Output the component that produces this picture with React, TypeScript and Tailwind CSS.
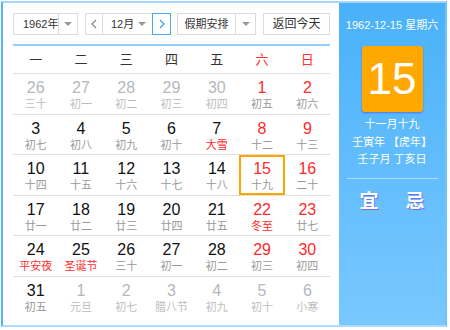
import React from 'react';

type Day = { n: number; l: string; other?: boolean; hl?: boolean; sel?: boolean };

const weeks: Day[][] = [
  [
    { n: 26, l: '三十', other: true },
    { n: 27, l: '初一', other: true },
    { n: 28, l: '初二', other: true },
    { n: 29, l: '初三', other: true },
    { n: 30, l: '初四', other: true },
    { n: 1, l: '初五' },
    { n: 2, l: '初六' },
  ],
  [
    { n: 3, l: '初七' },
    { n: 4, l: '初八' },
    { n: 5, l: '初九' },
    { n: 6, l: '初十' },
    { n: 7, l: '大雪', hl: true },
    { n: 8, l: '十二' },
    { n: 9, l: '十三' },
  ],
  [
    { n: 10, l: '十四' },
    { n: 11, l: '十五' },
    { n: 12, l: '十六' },
    { n: 13, l: '十七' },
    { n: 14, l: '十八' },
    { n: 15, l: '十九', sel: true },
    { n: 16, l: '二十' },
  ],
  [
    { n: 17, l: '廿一' },
    { n: 18, l: '廿二' },
    { n: 19, l: '廿三' },
    { n: 20, l: '廿四' },
    { n: 21, l: '廿五' },
    { n: 22, l: '冬至', hl: true },
    { n: 23, l: '廿七' },
  ],
  [
    { n: 24, l: '平安夜', hl: true },
    { n: 25, l: '圣诞节', hl: true },
    { n: 26, l: '三十' },
    { n: 27, l: '初一' },
    { n: 28, l: '初二' },
    { n: 29, l: '初三' },
    { n: 30, l: '初四' },
  ],
  [
    { n: 31, l: '初五' },
    { n: 1, l: '元旦', other: true },
    { n: 2, l: '初七', other: true },
    { n: 3, l: '腊八节', other: true },
    { n: 4, l: '初九', other: true },
    { n: 5, l: '初十', other: true },
    { n: 6, l: '小寒', other: true },
  ],
];

const weekdays = ['一', '二', '三', '四', '五', '六', '日'];

function Caret() {
  return <span className="w-0 h-0 border-x-[4px] border-t-[4px] border-x-transparent border-t-[#999]" />;
}

function Chevron({ dir, color }: { dir: 'l' | 'r'; color: string }) {
  return (
    <svg width="6" height="10" viewBox="0 0 6 10">
      <polyline
        points={dir === 'l' ? '5,1 1,5 5,9' : '1,1 5,5 1,9'}
        fill="none"
        stroke={color}
        strokeWidth="1.2"
      />
    </svg>
  );
}

export default function App() {
  return (
    <div className="ml-[1px] mt-[1px] w-[446px] h-[326px] flex bg-white border-2 border-t-[#a6d7fb] border-l-[#55b4f6] border-b-[#aedcfc] border-r-[#70c4fd] font-['Liberation_Sans','Noto_Sans_CJK_SC',sans-serif]">
      {/* Calendar */}
      <div className="w-[336px] pl-[10px] pt-[10px] pr-[9px] flex flex-col">
        {/* Controls */}
        <div className="flex h-[22px] text-[11px] text-[#333] whitespace-nowrap">
          <div className="w-[65px] flex border border-[#dcdcdc]">
            <span className="flex-1 flex items-center pl-[9px]">1962年</span>
            <span className="w-[19px] flex items-center justify-center border-l border-[#dcdcdc]">
              <Caret />
            </span>
          </div>
          <div className="ml-[7px] w-[86px] flex">
            <span className="w-[18px] flex items-center justify-center border border-[#dcdcdc]">
              <Chevron dir="l" color="#888" />
            </span>
            <span className="flex-1 flex items-center justify-between border-y border-[#dcdcdc] pl-[8px] pr-[6px]">
              12月
              <Caret />
            </span>
            <span className="w-[19px] flex items-center justify-center border border-[#4aa8f0]">
              <Chevron dir="r" color="#3a9cf0" />
            </span>
          </div>
          <div className="ml-[6px] w-[79px] flex border border-[#dcdcdc]">
            <span className="flex-1 flex items-center justify-center">假期安排</span>
            <span className="w-[20px] flex items-center justify-center border-l border-[#dcdcdc]">
              <Caret />
            </span>
          </div>
          <div className="ml-[7px] flex-1 flex items-center justify-center border border-[#dcdcdc] text-[12px]">
            返回今天
          </div>
        </div>

        <div className="mt-[9px] h-[2px] bg-[#93cff8]" />

        {/* Weekday header */}
        <div className="grid grid-cols-7 h-[28px] border-b border-[#dedede] text-[13px]">
          {weekdays.map((w, i) => (
            <div key={w} className={`flex items-center justify-center ${i >= 5 ? 'text-[#ff3030]' : 'text-[#333]'}`}>
              {w}
            </div>
          ))}
        </div>

        {/* Days */}
        {weeks.map((row, ri) => (
          <div
            key={ri}
            className={`grid grid-cols-7 h-[40.5px] ${ri < weeks.length - 1 ? 'border-b border-[#dedede]' : ''}`}
          >
            {row.map((d, ci) => {
              const numColor = d.other ? 'text-[#b4b8bd]' : ci >= 5 ? 'text-[#ff2a2a]' : 'text-[#111]';
              const lunarColor = d.hl ? 'text-[#ff2a2a]' : d.other ? 'text-[#bdbdbd]' : 'text-[#999]';
              return (
                <div
                  key={ci}
                  className={`flex flex-col items-center ${d.sel ? 'border-2 border-[#ffa500] pt-[4px]' : 'pt-[6px]'}`}
                >
                  <span className={`text-[16px] leading-[16px] ${numColor}`}>{d.n}</span>
                  <span className={`mt-[1px] text-[11px] leading-[14px] ${lunarColor}`}>{d.l}</span>
                </div>
              );
            })}
          </div>
        ))}
      </div>

      {/* Side panel */}
      <div className="flex-1 flex flex-col items-center pt-[15px] text-white bg-gradient-to-b from-[#49b1f9] to-[#78c8ff]">
        <div className="text-[11px] leading-[14px]">1962-12-15 星期六</div>
        <div className="mt-[14px] w-[61px] h-[66px] rounded-[3px] bg-[#ffa800] flex items-center justify-center text-[44px] shadow-[0_1px_2px_rgba(70,70,220,0.6)]">
          15
        </div>
        <div className="mt-[4px] text-[11px] leading-[17.5px] text-center whitespace-nowrap">
          <div>十一月十九</div>
          <div>壬寅年 【虎年】</div>
          <div>壬子月 丁亥日</div>
        </div>
        <div className="mt-[9px] w-[91px] h-px bg-white/50" />
        <div className="mt-[11px] flex gap-[27px] text-[19px] leading-[24px] font-bold [text-shadow:1px_1px_0_#6a70ee]">
          <span>宜</span>
          <span>忌</span>
        </div>
      </div>
    </div>
  );
}
